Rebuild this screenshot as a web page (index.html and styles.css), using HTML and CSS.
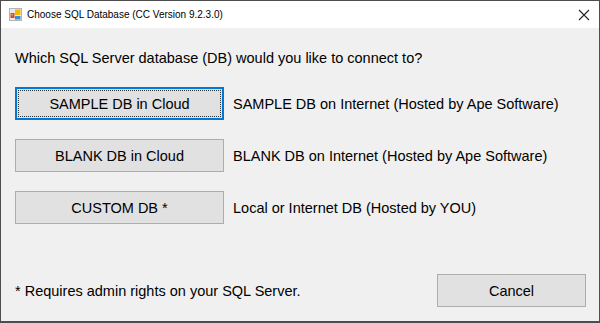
FILE: index.html
```html
<!DOCTYPE html>
<html lang="en">
<head>
  <meta charset="UTF-8" />
  <title>Choose SQL Database</title>
  <link rel="stylesheet" href="styles.css">
</head>
<body>
  <div class="window">
    <!-- title bar -->
    <div class="titlebar">
      <svg class="app-icon" width="13" height="13" viewBox="0 0 13 13">
        <rect x="0.5" y="0.5" width="12" height="12" fill="#e8e8e8" stroke="#b4b4b4"/>
        <rect x="1.5" y="5" width="4" height="5" fill="#d9452b"/>
        <rect x="2.5" y="6" width="1.5" height="1.5" fill="#f6a03a"/>
        <rect x="6" y="1.5" width="5.5" height="5.5" fill="#f5b900"/>
        <rect x="6" y="8" width="5.5" height="3.5" fill="#3a8fd9"/>
      </svg>
      <span class="title">Choose SQL Database (CC Version 9.2.3.0)</span>
      <svg class="close" width="12" height="12" viewBox="0 0 12 12">
        <path d="M1 1 L11 11 M11 1 L1 11" stroke="#222" stroke-width="1.1" fill="none"/>
      </svg>
    </div>

    <!-- dialog body -->
    <div class="content">
      <p class="question">Which SQL Server database (DB) would you like to connect to?</p>

      <div class="choices">
        <div class="choice">
          <button class="btn focused"><span>SAMPLE DB in Cloud</span></button>
          <span class="desc">SAMPLE DB on Internet (Hosted by Ape Software)</span>
        </div>
        <div class="choice">
          <button class="btn">BLANK DB in Cloud</button>
          <span class="desc">BLANK DB on Internet (Hosted by Ape Software)</span>
        </div>
        <div class="choice">
          <button class="btn">CUSTOM DB *</button>
          <span class="desc">Local or Internet DB (Hosted by YOU)</span>
        </div>
      </div>

      <div class="footer">
        <span class="note">* Requires admin rights on your SQL Server.</span>
        <button class="btn cancel">Cancel</button>
      </div>
    </div>
  </div>
</body>
</html>
```

FILE: styles.css
```css
* {
  box-sizing: border-box;
}

body {
  margin: 0;
  font-family: "Liberation Sans", Arial, sans-serif;
  color: #000;
  background: #f0f0f0;
}

.window {
  width: 600px;
  height: 323px;
  border: 1px solid #4d4d4d;
  border-bottom-width: 2px;
  display: flex;
  flex-direction: column;
  background: #f0f0f0;
}

.titlebar {
  height: 27px;
  background: #fff;
  display: flex;
  align-items: center;
  padding: 0 9px 0 8px;
  flex-shrink: 0;
}

.app-icon {
  margin-right: 5px;
}

.title {
  font-size: 10px;
  color: #000;
  flex: 1;
}

.close {
  margin-right: 0;
}

.content {
  flex: 1;
  display: flex;
  flex-direction: column;
  padding: 22px 13px 14px 14px;
}

.question {
  margin: 0;
  font-size: 14.5px;
  line-height: 17px;
}

.choices {
  margin-top: 20px;
  display: flex;
  flex-direction: column;
  gap: 19px;
}

.choice {
  display: flex;
  align-items: center;
  gap: 9px;
}

.btn {
  font-family: inherit;
  font-size: 14.5px;
  color: #000;
  background: #e1e1e1;
  border: 1px solid #adadad;
  border-radius: 0;
  padding: 0;
  width: 209px;
  height: 33px;
}

.btn.focused {
  border: 2px solid #0078d7;
  padding: 1px;
}

.btn.focused span {
  display: flex;
  align-items: center;
  justify-content: center;
  height: 100%;
  border: 1px dotted #333;
}

.desc {
  font-size: 14.5px;
}

.footer {
  margin-top: auto;
  display: flex;
  align-items: center;
  justify-content: space-between;
}

.note {
  font-size: 14.5px;
}

.btn.cancel {
  width: 149px;
}
```
